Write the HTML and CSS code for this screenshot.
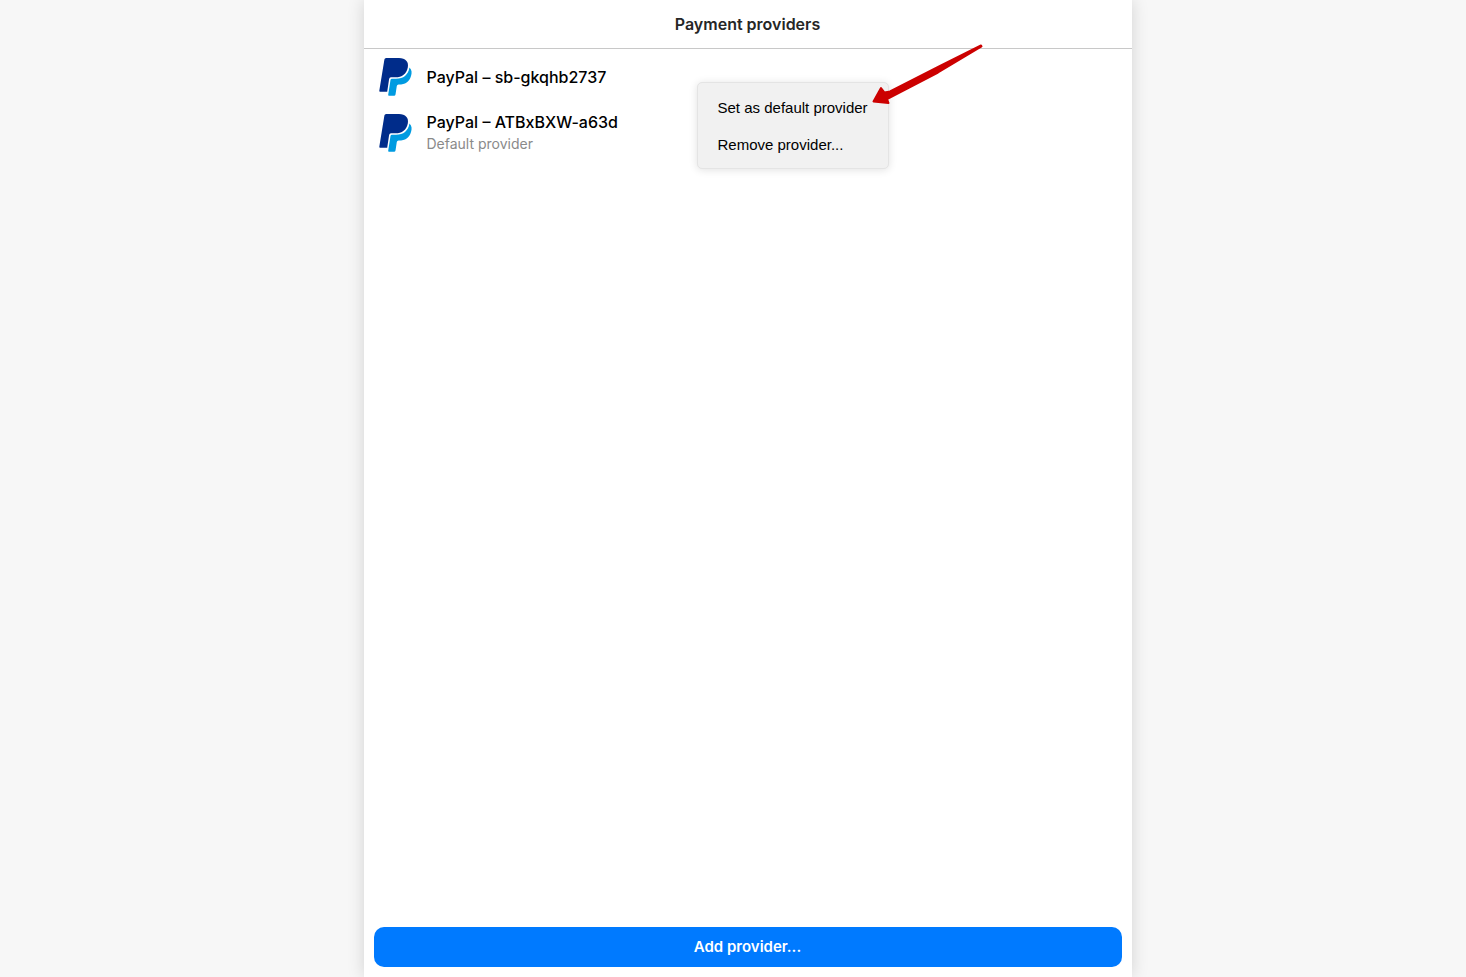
FILE: index.html
```html
<!DOCTYPE html>
<html lang="en">
<head>
<meta charset="utf-8">
<title>Payment providers</title>
<link rel="stylesheet" href="styles.css">
</head>
<body>
<svg class="sprite" aria-hidden="true">
  <symbol id="paypal" viewBox="0 0 33 38">
    <path fill="#002c8a" d="M7.2.1H20c6.500 0 10 3.900 8.800 9.400-1.300 6.500-5.800 9.800-12.300 9.800H12q-1.600 0-1.900 1.600L8.200 33.700H1Q.2 33.700.3 32.800L5.400 1.600Q5.600.1 7.200.1Z"/>
    <path fill="#009be1" d="M30.500 9.500C33 12 33 15 32 18 30.500 24 26 26.500 20 26.500h-.5q-1.400 0-1.700 1.500l-1.300 8.500Q16.300 37.700 15 37.700h-5Q9 37.700 9.200 36.700L11.500 22q.2-1.200 1.500-1.200h4C24.500 20.800 29 17 30.500 9.500Z"/>
  </symbol>
</svg>
<div class="panel">
  <header class="header"><h1 class="title">Payment providers</h1></header>
  <main class="content">
    <ul class="providers">
      <li class="provider">
        <svg class="logo" aria-hidden="true"><use href="#paypal"/></svg>
        <div class="name">PayPal – sb-gkqhb2737</div>
      </li>
      <li class="provider">
        <svg class="logo" aria-hidden="true"><use href="#paypal"/></svg>
        <div>
          <div class="name">PayPal – ATBxBXW-a63d</div>
          <div class="note">Default provider</div>
        </div>
      </li>
    </ul>
  </main>
  <footer class="footer"><button class="add" type="button">Add provider...</button></footer>
  <div class="menu">
    <button class="menu-item" type="button">Set as default provider</button>
    <button class="menu-item" type="button">Remove provider...</button>
  </div>
  <svg class="arrow" viewBox="870 42 116 64" aria-hidden="true">
    <path fill="#c00" stroke="#c00" stroke-width="2" stroke-linejoin="round" d="M981 45.500 940 65.800 890 91.500 884.500 92.500 881 88 873.500 101.500 888.500 103 887 99 938 72.500 981.500 46.500Z"/>
  </svg>
</div>
</body>
</html>
```

FILE: styles.css
```css
* { box-sizing: border-box; }

body {
  margin: 0;
  padding-left: 29px;
  background: #f7f7f7;
  font-family: Inter, "Liberation Sans", sans-serif;
  color: #000;
}

.sprite { display: none; }

.panel {
  position: relative;
  display: flex;
  flex-direction: column;
  max-width: 768px;
  min-height: 100vh;
  margin: 0 auto;
  background: #fff;
  box-shadow: 0 0 16px rgba(0, 0, 0, 0.15);
}

.header {
  padding: 12px;
  border-bottom: 1px solid #c8c8c8;
  text-align: center;
}

.title {
  margin: 0;
  font-size: 16px;
  line-height: 24px;
  font-weight: 600;
  color: #262626;
}

.content { flex: 1; }

.providers {
  margin: 0;
  padding: 0;
  list-style: none;
}

.provider {
  display: flex;
  align-items: center;
  gap: 15px;
  height: 56px;
  padding: 0 15px;
}

.logo {
  width: 33px;
  height: 38px;
}

.name {
  font-size: 16px;
  line-height: 22px;
  font-weight: 500;
}

.note {
  font-size: 14px;
  line-height: 22px;
  color: #8a8a8a;
}

.footer { padding: 10px; }

.add {
  display: block;
  width: 100%;
  height: 40px;
  border: 0;
  border-radius: 10px;
  background: #007aff;
  color: #fff;
  font: 600 15px/24px Inter, "Liberation Sans", sans-serif;
}

.menu {
  position: absolute;
  top: 82px;
  left: 333px;
  display: flex;
  flex-direction: column;
  width: 192px;
  padding: 6px 0 5px;
  border: 1px solid #e4e4e4;
  border-radius: 5px;
  background: #f1f1f1;
  box-shadow: 0 1px 8px rgba(0, 0, 0, 0.12);
}

.menu-item {
  height: 37px;
  padding: 0 20px;
  border: 0;
  background: none;
  color: #000;
  font: 15px/20px "Liberation Sans", sans-serif;
  text-align: left;
  white-space: nowrap;
}

.arrow {
  position: absolute;
  top: 42px;
  left: 506px;
  width: 116px;
  height: 64px;
}
```
